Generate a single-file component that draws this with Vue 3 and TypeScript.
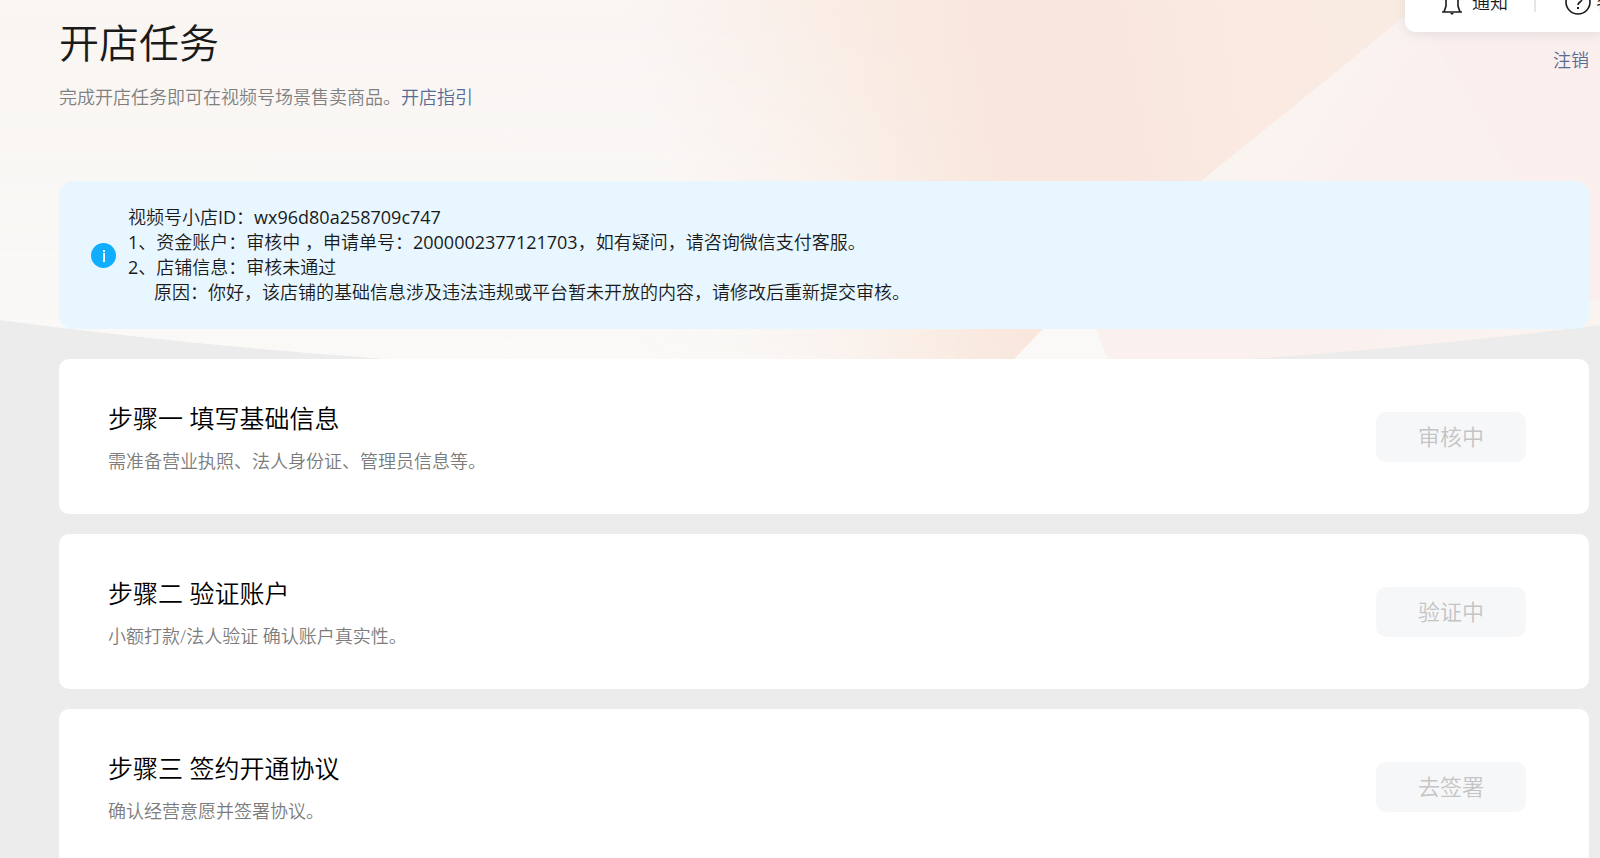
<script setup lang="ts">
interface Step {
  id: string
  title: string
  description: string
  action: string
}

const steps: Step[] = [
  { id: 'basic', title: '步骤一 填写基础信息', description: '需准备营业执照、法人身份证、管理员信息等。', action: '审核中' },
  { id: 'account', title: '步骤二 验证账户', description: '小额打款/法人验证 确认账户真实性。', action: '验证中' },
  { id: 'contract', title: '步骤三 签约开通协议', description: '确认经营意愿并签署协议。', action: '去签署' },
]
</script>

<template>
  <div class="page">
    <svg class="backdrop" viewBox="0 0 1600 376" preserveAspectRatio="none" aria-hidden="true">
      <defs>
        <linearGradient id="base" gradientUnits="userSpaceOnUse" x1="0" x2="1560" y1="0" y2="-250">
          <stop offset="0" stop-color="#faf6f3" />
          <stop offset="0.39" stop-color="#faf6f4" />
          <stop offset="0.46" stop-color="#faf1ed" />
          <stop offset="0.54" stop-color="#faece3" />
          <stop offset="0.61" stop-color="#f9e7dd" />
          <stop offset="0.69" stop-color="#f9e7df" />
          <stop offset="0.77" stop-color="#faeae1" />
          <stop offset="0.88" stop-color="#faece3" />
        </linearGradient>
        <linearGradient id="fade" x1="0" x2="0" y1="0" y2="1">
          <stop offset="0" stop-color="#faf9f7" stop-opacity="0" />
          <stop offset="1" stop-color="#faf9f7" stop-opacity="1" />
        </linearGradient>
        <linearGradient id="fadeMask" x1="0" x2="1" y1="0" y2="0">
          <stop offset="0.4" stop-color="#fff" />
          <stop offset="0.62" stop-color="#000" />
        </linearGradient>
        <mask id="leftOnly">
          <rect width="1600" height="376" fill="url(#fadeMask)" />
        </mask>
        <linearGradient id="facet" gradientUnits="userSpaceOnUse" x1="1260" y1="120" x2="1480" y2="260">
          <stop offset="0" stop-color="#faf4f1" />
          <stop offset="0.4" stop-color="#faf1ef" />
          <stop offset="1" stop-color="#faf0ed" />
        </linearGradient>
        <linearGradient id="facetLow" gradientUnits="userSpaceOnUse" x1="1100" y1="0" x2="1600" y2="0">
          <stop offset="0" stop-color="#faf1ee" />
          <stop offset="0.5" stop-color="#faf1ee" />
          <stop offset="1" stop-color="#faf4f0" />
        </linearGradient>
        <clipPath id="arc">
          <path d="M0 0H1600V325Q1200 374 820 374Q410 374 0 320Z" />
        </clipPath>
      </defs>
      <g clip-path="url(#arc)">
        <rect width="1600" height="376" fill="url(#base)" />
        <rect width="1600" height="376" fill="url(#fade)" mask="url(#leftOnly)" />
        <path d="M1425 0L1201 181L1043 329L998 376H1600V0Z" fill="url(#facet)" />
        <path d="M1410 0L1515 178L1560 300H1600V0Z" fill="#faeeeb" fill-opacity="0.5" />
        <path d="M1060 300L1096 329L1114 376H1600V300Z" fill="url(#facetLow)" />
        <path d="M1043 329H1096L1114 376H998Z" fill="#faf9f7" />
      </g>
    </svg>

    <nav class="toolbar" aria-label="工具栏">
      <a class="tool" href="#notice">
        <svg class="bell" viewBox="0 0 20 26" aria-hidden="true">
          <path d="M0 23H20M2 23L4 17V10C4 5 6 3 10 3S16 5 16 10V17L18 23" fill="none" stroke="#1a1a1a" stroke-width="1.6" />
          <path d="M8 24H12L10 26Z" fill="#1a1a1a" />
        </svg>
        通知
      </a>
      <span class="divider"></span>
      <a class="tool help" href="#help">
        <svg class="question" viewBox="0 0 26 26" aria-hidden="true">
          <circle cx="13" cy="13" r="12" fill="none" stroke="#1a1a1a" stroke-width="1.6" />
          <path d="M9 10C9 5 17 5 17 10C17 13 13 13 13 16" fill="none" stroke="#1a1a1a" stroke-width="1.6" />
          <rect x="12" y="18" width="2" height="2" fill="#1a1a1a" />
        </svg>
        客服
      </a>
    </nav>

    <main class="content">
      <header class="header">
        <div>
          <h1>开店任务</h1>
          <p class="intro">完成开店任务即可在视频号场景售卖商品。<a href="#guide">开店指引</a></p>
        </div>
        <a class="logout" href="#logout">注销</a>
      </header>

      <section class="notice">
        <svg class="info" viewBox="0 0 25 25" aria-hidden="true">
          <circle cx="12.5" cy="12.5" r="12.5" fill="#10aeff" />
          <rect x="12" y="7" width="2" height="2" fill="#fff" />
          <rect x="12" y="10" width="2" height="9" fill="#fff" />
        </svg>
        <div>
          <p>视频号小店<span class="code">ID</span>：<span class="code">wx96d80a258709c747</span></p>
          <p><span class="code">1</span>、资金账户：审核中 ，申请单号：<span class="code">2000002377121703</span>，如有疑问，请咨询微信支付客服。</p>
          <p><span class="code">2</span>、店铺信息：审核未通过</p>
          <p class="reason">原因：你好，该店铺的基础信息涉及违法违规或平台暂未开放的内容，请修改后重新提交审核。</p>
        </div>
      </section>

      <section v-for="step in steps" :key="step.id" class="card">
        <div>
          <h2>{{ step.title }}</h2>
          <p>{{ step.description }}</p>
        </div>
        <button type="button" disabled>{{ step.action }}</button>
      </section>
    </main>
  </div>
</template>

<style>
body {
  margin: 0;
  background: #ececec;
}
</style>

<style scoped>
.page {
  position: relative;
  height: 100vh;
  overflow: hidden;
  font-family: "Open Sans", "Noto Sans CJK SC", sans-serif;
  font-size: 18px;
  font-weight: 350;
  line-height: 25px;
  color: #1a1a1a;
}
h1,
h2,
p {
  margin: 0;
  font-weight: 350;
}
a {
  color: #576b95;
  text-decoration: none;
}
.backdrop {
  position: absolute;
  top: 0;
  left: 0;
  width: 100%;
  height: 376px;
}
.toolbar {
  position: absolute;
  top: -28px;
  right: 0;
  z-index: 1;
  display: flex;
  align-items: center;
  box-sizing: border-box;
  width: 195px;
  height: 60px;
  padding-left: 37px;
  overflow: hidden;
  background: #fff;
  border-bottom-left-radius: 10px;
  box-shadow: 0 2px 12px rgba(90, 110, 130, 0.15);
  white-space: nowrap;
}
.tool {
  display: flex;
  flex: none;
  align-items: center;
  gap: 10px;
  color: #1a1a1a;
}
.bell {
  width: 20px;
  height: 26px;
}
.divider {
  flex: none;
  width: 2px;
  height: 20px;
  margin: 0 29px 0 26px;
  background: #e6e6e6;
}
.question {
  width: 26px;
  height: 26px;
}
.help {
  gap: 5px;
}
.content {
  position: relative;
  padding: 15px 11px 0 59px;
}
.header {
  display: flex;
  justify-content: space-between;
  margin-bottom: 71px;
}
h1 {
  margin-bottom: 14px;
  font-size: 40px;
  line-height: 56px;
}
.intro {
  color: #808080;
}
.logout {
  margin-top: 33px;
}
.notice {
  display: flex;
  align-items: center;
  gap: 12px;
  margin-bottom: 30px;
  padding: 24px 32px;
  background: #e7f6ff;
  border-radius: 14px;
}
.info {
  flex: none;
  width: 25px;
  height: 25px;
}
.code {
  font-weight: 400;
}
.reason {
  padding-left: 26px;
}
.card {
  display: flex;
  align-items: center;
  justify-content: space-between;
  margin-bottom: 20px;
  padding: 43px 63px 43px 49px;
  background: #fff;
  border-radius: 10px;
}
h2 {
  margin-bottom: 17px;
  font-size: 25px;
  line-height: 33px;
  color: #000;
}
.card p {
  line-height: 19px;
  color: #7c7c7c;
}
button {
  width: 150px;
  height: 50px;
  padding: 0;
  border: 0;
  border-radius: 10px;
  background: #f6f7f9;
  color: #c4c4c4;
  font: inherit;
  font-size: 22px;
}
</style>
